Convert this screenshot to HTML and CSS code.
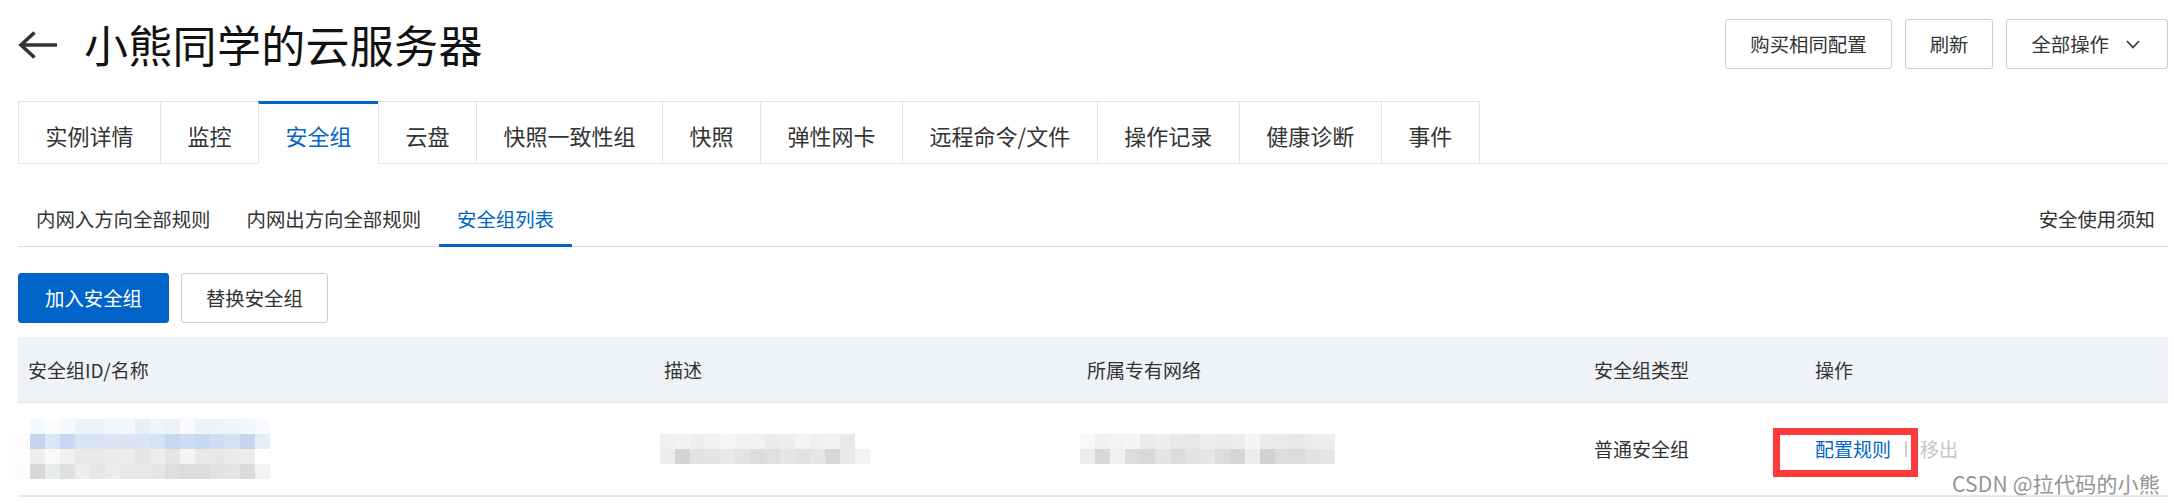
FILE: index.html
```html
<!DOCTYPE html>
<html lang="zh-CN">
<head>
<meta charset="utf-8">
<title>小熊同学的云服务器</title>
<link rel="stylesheet" href="styles.css">
</head>
<body>
<div class="page">
  <header class="head">
    <div class="title-wrap">
      <svg class="back" width="40" height="28" viewBox="0 0 40 28" aria-hidden="true">
        <path d="M3 14 H39 M16.5 1.5 L3 14 L16.5 26.5" fill="none" stroke="#333" stroke-width="3.6" stroke-linecap="butt" stroke-linejoin="miter"/>
      </svg>
      <h1 class="title">小熊同学的云服务器</h1>
    </div>
    <div class="head-actions">
      <button class="btn">购买相同配置</button>
      <button class="btn">刷新</button>
      <button class="btn btn-drop">全部操作<svg class="chev" width="14" height="9" viewBox="0 0 14 9" aria-hidden="true"><path d="M1 1 L7 7.5 L13 1" fill="none" stroke="#333" stroke-width="1.6"/></svg></button>
    </div>
  </header>

  <nav class="tabs">
    <div class="tab">实例详情</div>
    <div class="tab">监控</div>
    <div class="tab tab-active">安全组</div>
    <div class="tab">云盘</div>
    <div class="tab">快照一致性组</div>
    <div class="tab">快照</div>
    <div class="tab">弹性网卡</div>
    <div class="tab">远程命令/文件</div>
    <div class="tab">操作记录</div>
    <div class="tab">健康诊断</div>
    <div class="tab">事件</div>
  </nav>

  <div class="subtabs">
    <div class="subtab-list">
      <div class="subtab">内网入方向全部规则</div>
      <div class="subtab">内网出方向全部规则</div>
      <div class="subtab subtab-active">安全组列表</div>
    </div>
    <div class="notice">安全使用须知</div>
  </div>

  <div class="toolbar">
    <button class="btn btn-primary">加入安全组</button>
    <button class="btn">替换安全组</button>
  </div>

  <div class="table">
    <div class="thead">
      <div class="cell">安全组ID/名称</div>
      <div class="cell">描述</div>
      <div class="cell">所属专有网络</div>
      <div class="cell">安全组类型</div>
      <div class="cell">操作</div>
    </div>
    <div class="trow">
      <div class="cell">
        <div class="blur blur-id">
          <div class="band b-id1"></div>
          <div class="band b-id2"></div>
          <div class="band b-id3"></div>
          <div class="band b-id4"></div>
        </div>
      </div>
      <div class="cell">
        <div class="blur blur-desc">
          <div class="band b-desc1"></div>
          <div class="band b-desc2"></div>
        </div>
      </div>
      <div class="cell">
        <div class="blur blur-vpc">
          <div class="band b-vpc1"></div>
          <div class="band b-vpc2"></div>
        </div>
      </div>
      <div class="cell">普通安全组</div>
      <div class="cell cell-ops">
        <span class="highlight" aria-hidden="true"></span>
        <a class="link">配置规则</a>
        <span class="sep"></span>
        <span class="disabled">移出</span>
      </div>
    </div>
  </div>

  <div class="watermark">CSDN @拉代码的小熊</div>
</div>
</body>
</html>
```

FILE: styles.css
```css
* { box-sizing: border-box; }

html, body {
  margin: 0;
  padding: 0;
  background: #fff;
}

body {
  font-family: "Noto Sans CJK SC", "Noto Sans", sans-serif;
  color: #333;
}

.page {
  position: relative;
  width: 2174px;
  height: 503px;
  padding: 19px 6px 0 18px;
  overflow: hidden;
}

/* header */
.head {
  display: flex;
  justify-content: space-between;
  align-items: center;
  height: 50px;
}

.title-wrap {
  display: flex;
  align-items: center;
}

.back {
  display: block;
  margin-top: 1px;
}

.title {
  margin: 0 0 0 26px;
  font-size: 44px;
  line-height: 50px;
  font-weight: 400;
  color: #111;
  letter-spacing: 0.3px;
}

.head-actions {
  display: flex;
  gap: 13px;
}

.btn {
  font-family: inherit;
  font-size: 19.4px;
  line-height: 26px;
  height: 50px;
  padding: 0 24px;
  border: 1px solid #c9ccd2;
  border-radius: 3px;
  background: #fff;
  color: #333;
  display: inline-flex;
  align-items: center;
  cursor: pointer;
}

.btn-drop {
  padding: 0 27px 0 24px;
}

.chev {
  display: block;
  margin-left: 17px;
}

.btn-primary {
  background: #0064c8;
  border-color: #0064c8;
  color: #fff;
  padding: 0 26px;
}

/* main tabs */
.tabs {
  display: flex;
  margin-top: 32px;
  height: 63px;
  border-bottom: 1px solid #e3e3e3;
}

.tab {
  height: 63px;
  padding: 4px 26.5px 0;
  display: flex;
  align-items: center;
  font-size: 22px;
  color: #333;
  border: 1px solid #e3e3e3;
  border-right: none;
  background: #fff;
}

.tab:last-child {
  border-right: 1px solid #e3e3e3;
}

.tab-active {
  border-top: 3px solid #0064c8;
  border-bottom-color: #fff;
  padding-top: 2px;
  color: #0064c8;
}

/* sub tabs */
.subtabs {
  display: flex;
  justify-content: space-between;
  align-items: flex-end;
  margin-top: 18px;
  border-bottom: 1px solid #dedede;
  padding-right: 13px;
}

.subtab-list {
  display: flex;
}

.subtab {
  font-size: 19.4px;
  line-height: 26px;
  padding: 24px 18px 12px;
  border-bottom: 3px solid transparent;
  margin-bottom: -1px;
  color: #333;
}

.subtab-active {
  color: #0064c8;
  border-bottom-color: #0064c8;
}

.notice {
  font-size: 19.4px;
  line-height: 26px;
  padding-bottom: 14px;
  color: #333;
}

/* toolbar */
.toolbar {
  display: flex;
  gap: 12px;
  margin-top: 26px;
}

/* table */
.table {
  margin-top: 14px;
}

.thead,
.trow {
  display: grid;
  grid-template-columns: 636px 423px 507px 221px 1fr;
  align-items: center;
}

.thead {
  height: 66px;
  background: #eff2f7;
  border-bottom: 1px solid #e1e5eb;
  font-size: 19px;
  color: #333;
}

.trow {
  height: 94px;
  border-bottom: 2px solid #e6e9ee;
  font-size: 19px;
  color: #333;
}

.cell {
  padding-left: 10px;
  line-height: 26px;
}

.cell-ops {
  position: relative;
  display: flex;
  align-items: center;
  height: 100%;
}

.link {
  color: #0064c8;
  position: relative;
  z-index: 1;
}

.sep {
  display: block;
  width: 2px;
  height: 16px;
  background: #cfcfcf;
  margin: 0 13px 0 14px;
  position: relative;
  z-index: 1;
}

.disabled {
  color: #c6c6c6;
}

.highlight {
  position: absolute;
  left: -32px;
  top: 25px;
  width: 145px;
  height: 49px;
  border: 7px solid #fe3939;
}

/* pixelated blurred values */
.blur {
  display: flex;
  flex-direction: column;
}

.band {
  height: 15px;
}

.blur-id {
  margin-left: -13px;
  width: 255px;
}

.b-id1 {
  background: linear-gradient(90deg,
    #ffffff 0 15px, #f5f8fc 15px 30px, #fafcfe 30px 45px, #f6f9fc 45px 60px,
    #eef3fa 60px 75px, #edf3fa 75px 90px, #f3f7fc 90px 105px, #f4f7fc 105px 120px,
    #e9eff9 120px 135px, #f1f5fb 135px 150px, #edf1f9 150px 165px, #f8fafd 165px 180px,
    #eef2fa 180px 195px, #eff3fa 195px 210px, #f1f5fb 210px 225px, #f4f7fc 225px 240px,
    #f8fafd 240px 255px);
}

.b-id2 {
  background: linear-gradient(90deg,
    #fcfcfc 0 15px, #c5d5ee 15px 30px, #dbe7f6 30px 45px, #c8d8f0 45px 60px,
    #d8e5f5 60px 75px, #d9e5f5 75px 90px, #dbe4f4 90px 105px, #d6e4f4 105px 120px,
    #dbe5f5 120px 135px, #d5e1f4 135px 150px, #c6d8f1 150px 165px, #cddcf2 165px 180px,
    #c7d8f2 180px 195px, #d0dcf2 195px 210px, #d4e1f4 210px 225px, #c9d5f0 225px 240px,
    #e4eef9 240px 255px);
}

.b-id3 {
  background: linear-gradient(90deg,
    #fdfdfd 0 15px, #eeeeee 15px 30px, #f6f8fa 30px 45px, #f2f0ef 45px 60px,
    #e8eae9 60px 75px, #e8e9e8 75px 90px, #ebebea 90px 105px, #ececec 105px 120px,
    #e6e4e5 120px 135px, #ececec 135px 150px, #e6e6e6 150px 165px, #f4f4f4 165px 180px,
    #e8e8e8 180px 195px, #e8e7e7 195px 210px, #ebebeb 210px 225px, #ececec 225px 240px,
    #ffffff 240px 255px);
}

.b-id4 {
  background: linear-gradient(90deg,
    #fcfcfc 0 15px, #d9d8d7 15px 30px, #e8ebec 30px 45px, #dde0df 45px 60px,
    #ebeced 60px 75px, #e8e7e6 75px 90px, #ececea 90px 105px, #e9e9ec 105px 120px,
    #e8e8e8 120px 135px, #e5e6e6 135px 150px, #dedfdf 150px 165px, #dcdcdc 165px 180px,
    #dddddd 180px 195px, #e2e2e2 195px 210px, #e5e5e5 210px 225px, #dcdadb 225px 240px,
    #f3f3f5 240px 255px);
}

.blur-desc {
  margin-left: -4px;
  width: 210px;
}

.b-desc1 {
  width: 195px;
  background: linear-gradient(90deg,
    #f0f0f0 0 15px, #f2f2f2 15px 30px, #eeeeee 30px 45px, #f1f1f1 45px 60px,
    #f6f6f6 60px 75px, #f2f2f2 75px 90px, #f1f1f1 90px 105px, #ebebeb 105px 120px,
    #ededed 120px 135px, #f3f3f3 135px 150px, #efefef 150px 165px, #f1f1f1 165px 180px,
    #e9e9e9 180px 195px);
}

.b-desc2 {
  width: 210px;
  background: linear-gradient(90deg,
    #ececec 0 15px, #d4d4d4 15px 30px, #e2e2e2 30px 45px, #e4e4e4 45px 60px,
    #e8e8e8 60px 75px, #e3e3e3 75px 90px, #dcdcdc 90px 105px, #e0e0e0 105px 120px,
    #e6e6e6 120px 135px, #e2e2e2 135px 150px, #e6e6e6 150px 165px, #d8d8d8 165px 180px,
    #e9e9e9 180px 195px, #f3f3f3 195px 210px);
}

.blur-vpc {
  margin-left: -7px;
  width: 255px;
}

.b-vpc1 {
  background: linear-gradient(90deg,
    #f8f8f8 0 15px, #f0f0f0 15px 30px, #f3f3f3 30px 45px, #f5f5f5 45px 60px,
    #ebebeb 60px 75px, #eeeeee 75px 90px, #e9e9e9 90px 105px, #e8e8e8 105px 120px,
    #eeeeee 120px 135px, #ebebeb 135px 150px, #ececec 150px 165px, #f4f4f4 165px 180px,
    #ebebeb 180px 195px, #eaeaea 195px 210px, #e8e8e8 210px 225px, #ececec 225px 240px,
    #eeeeee 240px 255px);
}

.b-vpc2 {
  background: linear-gradient(90deg,
    #ececec 0 15px, #d8d8d8 15px 30px, #f0f0f0 30px 45px, #dcdcdc 45px 60px,
    #d9d9d9 60px 75px, #e4e4e4 75px 90px, #dcdcdc 90px 105px, #e3e3e3 105px 120px,
    #e6e6e6 120px 135px, #dcdcdc 135px 150px, #d6d6d6 150px 165px, #ececec 165px 180px,
    #d1d1d1 180px 195px, #dcdcdc 195px 210px, #dcdcdc 210px 225px, #e2e2e2 225px 240px,
    #e6e6e6 240px 255px);
}

/* watermark overlay */
.watermark {
  position: absolute;
  right: 14px;
  top: 469px;
  font-size: 21px;
  line-height: 28px;
  color: #949494;
  letter-spacing: 0.2px;
}
```
